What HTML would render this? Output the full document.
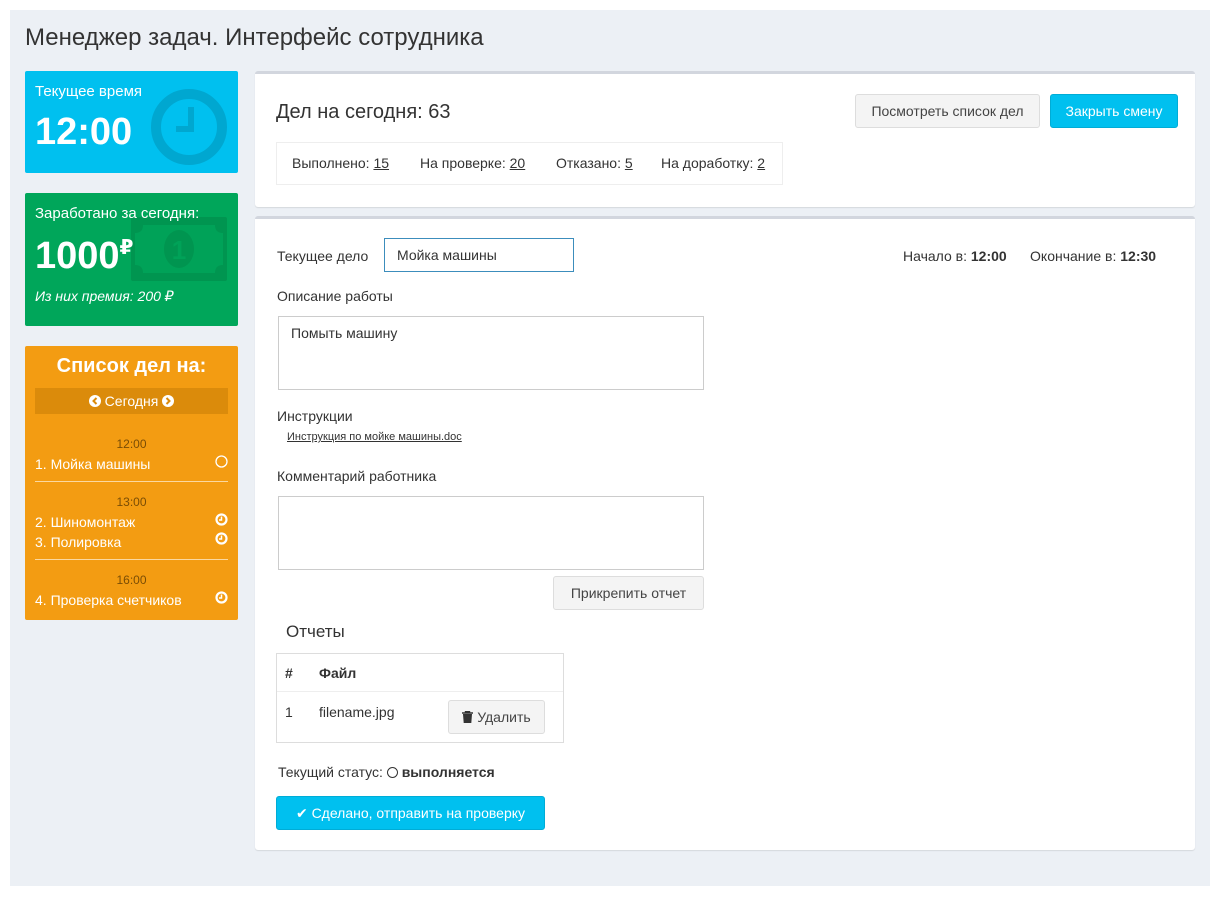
<!DOCTYPE html>
<html><head><meta charset="utf-8"><style>
*{box-sizing:border-box;margin:0;padding:0}
body{width:1220px;height:897px;background:#fff;font-family:"Liberation Sans","DejaVu Sans",sans-serif;font-size:14px;color:#333;position:relative;overflow:hidden}
.wrap{position:absolute;left:10px;top:10px;width:1200px;height:876px;background:#ecf0f5}
.abs{position:absolute}
h1{position:absolute;left:25px;top:24px;font-size:24px;font-weight:normal;color:#333}
.box{position:absolute;border-radius:2px;color:#fff}
.panel{position:absolute;background:#fff;border-top:3px solid #d2d6de;border-radius:3px;box-shadow:0 1px 1px rgba(0,0,0,.1)}
.btn{position:absolute;border-radius:3px;font-size:14px;text-align:center;line-height:32px}
.inp{position:absolute;border:1px solid #ccc;background:#fff}
u{text-decoration:underline}
.ck{position:absolute;left:190px;width:13px;height:13px}
</style></head><body>
<div class="wrap"></div>
<h1>Менеджер задач. Интерфейс сотрудника</h1>

<div class="box" style="left:25px;top:71px;width:213px;height:102px;background:#00c0ef">
 <svg class="abs" style="left:125px;top:17px" width="78" height="78" viewBox="0 0 78 78"><circle cx="39" cy="39" r="33" fill="none" stroke="#00a7d0" stroke-width="10"/><path d="M41 19V41H26" fill="none" stroke="#00a7d0" stroke-width="6"/></svg>
 <div class="abs" style="left:10px;top:12px;font-size:15px">Текущее время</div>
 <div class="abs" style="left:10px;top:40px;font-size:38px;font-weight:bold">12:00</div>
</div>

<div class="box" style="left:25px;top:193px;width:213px;height:133px;background:#00a65a">
 <svg class="abs" style="left:106px;top:24px" width="96" height="64" viewBox="0 0 96 64"><rect x="0" y="0" width="96" height="64" rx="2" fill="#009550"/><path d="M12 8Q12 16 4 16V48Q12 48 12 56H84Q84 48 92 48V16Q84 16 84 8Z" fill="#00a258"/><ellipse cx="48" cy="32" rx="15" ry="19" fill="#009550"/><text x="48" y="42" text-anchor="middle" font-size="26" font-weight="bold" fill="#00a258" font-family="Liberation Sans">1</text></svg>
 <div class="abs" style="left:10px;top:12px;font-size:15px">Заработано за сегодня:</div>
 <div class="abs" style="left:10px;top:42px;font-size:38px;font-weight:bold">1000<span style="font-size:20px;vertical-align:top">₽</span></div>
 <div class="abs" style="left:10px;top:95px;font-size:14px;font-style:italic">Из них премия: 200 ₽</div>
</div>

<div class="box" style="left:25px;top:346px;width:213px;height:274px;background:#f39c12">
 <div class="abs" style="left:0;width:213px;top:9px;text-align:center;font-size:20px;font-weight:bold">Список дел на:</div>
 <div class="abs" style="left:10px;top:42px;width:193px;height:26px;background:#db8b0b;text-align:center;line-height:26px;font-size:14px">
  <svg width="12" height="12" viewBox="0 0 12 12" style="vertical-align:-1px"><circle cx="6" cy="6" r="6" fill="#fff"/><path d="M7.5 3L4.5 6L7.5 9" stroke="#db8b0b" stroke-width="2" fill="none"/></svg> Сегодня <svg width="12" height="12" viewBox="0 0 12 12" style="vertical-align:-1px"><circle cx="6" cy="6" r="6" fill="#fff"/><path d="M4.5 3L7.5 6L4.5 9" stroke="#db8b0b" stroke-width="2" fill="none"/></svg></div>
 <div class="abs" style="left:0;width:213px;top:91px;text-align:center;font-size:12px;color:#7a4d05">12:00</div>
 <div class="abs" style="left:10px;top:110px;font-size:14px">1. Мойка машины</div>
 <svg class="ck" style="top:109px" viewBox="0 0 13 13"><circle cx="6.5" cy="6.5" r="5.5" fill="none" stroke="#fff" stroke-width="1.3"/></svg>
 <div class="abs" style="left:10px;top:135px;width:193px;height:1px;background:#fbd8a0"></div>
 <div class="abs" style="left:0;width:213px;top:149px;text-align:center;font-size:12px;color:#7a4d05">13:00</div>
 <div class="abs" style="left:10px;top:168px;font-size:14px">2. Шиномонтаж</div>
 <div class="abs" style="left:10px;top:188px;font-size:14px">3. Полировка</div>
 <svg class="ck" style="top:167px" viewBox="0 0 13 13"><circle cx="6.5" cy="6.5" r="5" fill="none" stroke="#fff" stroke-width="2.2"/><path d="M6.5 3.5V7H4" stroke="#fff" stroke-width="1.5" fill="none"/></svg>
 <svg class="ck" style="top:186px" viewBox="0 0 13 13"><circle cx="6.5" cy="6.5" r="5" fill="none" stroke="#fff" stroke-width="2.2"/><path d="M6.5 3.5V7H4" stroke="#fff" stroke-width="1.5" fill="none"/></svg>
 <div class="abs" style="left:10px;top:213px;width:193px;height:1px;background:#fbd8a0"></div>
 <div class="abs" style="left:0;width:213px;top:227px;text-align:center;font-size:12px;color:#7a4d05">16:00</div>
 <div class="abs" style="left:10px;top:246px;font-size:14px">4. Проверка счетчиков</div>
 <svg class="ck" style="top:245px" viewBox="0 0 13 13"><circle cx="6.5" cy="6.5" r="5" fill="none" stroke="#fff" stroke-width="2.2"/><path d="M6.5 3.5V7H4" stroke="#fff" stroke-width="1.5" fill="none"/></svg>
</div>

<div class="panel" style="left:255px;top:71px;width:940px;height:136px">
 <div class="abs" style="left:21px;top:27px;font-size:20px">Дел на сегодня: 63</div>
 <div class="btn" style="left:600px;top:20px;width:185px;height:34px;background:#f4f4f4;border:1px solid #ddd;color:#444">Посмотреть список дел</div>
 <div class="btn" style="left:795px;top:20px;width:128px;height:34px;background:#00c0ef;border:1px solid #00acd6;color:#fff">Закрыть смену</div>
 <div class="abs" style="left:21px;top:68px;width:507px;height:43px;border:1px solid #eee;font-size:14px">
  <div class="abs" style="left:15px;top:12px">Выполнено: <u>15</u></div>
  <div class="abs" style="left:143px;top:12px">На проверке: <u>20</u></div>
  <div class="abs" style="left:279px;top:12px">Отказано: <u>5</u></div>
  <div class="abs" style="left:384px;top:12px">На доработку: <u>2</u></div>
 </div>
</div>

<div class="panel" style="left:255px;top:216px;width:940px;height:634px">
 <div class="abs" style="left:22px;top:29px">Текущее дело</div>
 <div class="inp" style="left:129px;top:19px;width:190px;height:34px;border-color:#3c8dbc;padding:8px 12px">Мойка машины</div>
 <div class="abs" style="left:648px;top:29px">Начало в: <b>12:00</b>&nbsp;&nbsp;&nbsp;&nbsp;&nbsp; Окончание в: <b>12:30</b></div>
 <div class="abs" style="left:22px;top:69px">Описание работы</div>
 <div class="inp" style="left:23px;top:97px;width:426px;height:74px;padding:8px 12px">Помыть машину</div>
 <div class="abs" style="left:22px;top:189px">Инструкции</div>
 <div class="abs" style="left:32px;top:212px;font-size:11px"><u>Инструкция по мойке машины.doc</u></div>
 <div class="abs" style="left:22px;top:249px">Комментарий работника</div>
 <div class="inp" style="left:23px;top:277px;width:426px;height:74px"></div>
 <div class="btn" style="left:298px;top:357px;width:151px;height:34px;background:#f4f4f4;border:1px solid #ddd;color:#444">Прикрепить отчет</div>
 <div class="abs" style="left:31px;top:403px;font-size:17px">Отчеты</div>
 <div class="abs" style="left:21px;top:434px;width:288px;height:90px;border:1px solid #ddd">
  <div class="abs" style="left:8px;top:11px;font-weight:bold">#</div>
  <div class="abs" style="left:42px;top:11px;font-weight:bold">Файл</div>
  <div class="abs" style="left:0;top:37px;width:286px;height:1px;background:#eee"></div>
  <div class="abs" style="left:8px;top:50px">1</div>
  <div class="abs" style="left:42px;top:50px">filename.jpg</div>
  <div class="btn" style="left:171px;top:46px;width:97px;height:34px;background:#f4f4f4;border:1px solid #ddd;color:#444"><svg width="11" height="12" viewBox="0 0 11 12" style="vertical-align:-1px"><path d="M0 2H11M3.5 2V0.5H7.5V2" stroke="#333" stroke-width="1.4" fill="none"/><path d="M1 3H10L9.3 12H1.7Z" fill="#333"/></svg> Удалить</div>
 </div>
 <div class="abs" style="left:23px;top:545px">Текущий статус: <span style="display:inline-block;width:11px;height:11px;border:1px solid #333;border-radius:50%;vertical-align:-1px"></span> <b>выполняется</b></div>
 <div class="btn" style="left:21px;top:577px;width:269px;height:34px;background:#00c0ef;border:1px solid #00acd6;color:#fff">✔ Сделано, отправить на проверку</div>
</div>
</body></html>
